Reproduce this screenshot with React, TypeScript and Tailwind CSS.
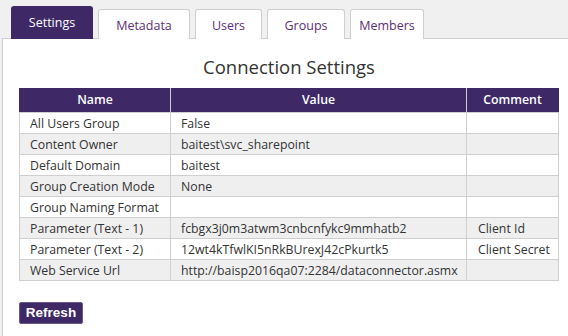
import React from "react"

const rows = [
  { name: "All Users Group", value: "False", comment: "" },
  { name: "Content Owner", value: "baitest\\svc_sharepoint", comment: "" },
  { name: "Default Domain", value: "baitest", comment: "" },
  { name: "Group Creation Mode", value: "None", comment: "" },
  { name: "Group Naming Format", value: "", comment: "" },
  { name: "Parameter (Text - 1)", value: "fcbgx3j0m3atwm3cnbcnfykc9mmhatb2", comment: "Client Id" },
  { name: "Parameter (Text - 2)", value: "12wt4kTfwlKI5nRkBUrexJ42cPkurtk5", comment: "Client Secret" },
  { name: "Web Service Url", value: "http://baisp2016qa07:2284/dataconnector.asmx", comment: "" },
]

const tabs = [
  { label: "Settings", w: "w-[82px]" },
  { label: "Metadata", w: "w-[92px]" },
  { label: "Users", w: "w-[67px]" },
  { label: "Groups", w: "w-[78px]" },
  { label: "Members", w: "w-[74px]" },
]

export default function App() {
  return (
    <div className="w-[568px] h-[336px] overflow-hidden bg-[#f0f0f0] font-['Open_Sans',sans-serif] text-[#333]">
      {/* Tabs */}
      <div className="flex items-end gap-[5px] pl-[11px] pt-[6px] h-[39px]">
        {tabs.map((t, i) =>
          i === 0 ? (
            <div
              key={t.label}
              className={`${t.w} h-[33px] bg-[#3e2966] rounded-t-[3px] flex items-center justify-center text-white text-[12.5px] pt-[2px] relative z-10`}
            >
              {t.label}
            </div>
          ) : (
            <div
              key={t.label}
              className={`${t.w} h-[30px] bg-white border border-b-0 border-[#cfcfcf] rounded-t-[3px] flex items-center justify-center text-[#5e2e72] text-[12.5px] pt-[3px]`}
            >
              {t.label}
            </div>
          )
        )}
      </div>

      {/* Panel */}
      <div className="ml-[2px] -mt-[1px] w-[580px] h-[320px] bg-white border border-[#cfcfcf] pl-[16px] pt-[15px]">
        <h2 className="w-[540px] text-center text-[18.5px] leading-[26px] text-[#333]">Connection Settings</h2>
        <table className="mt-[8px] w-[540px] border-collapse text-[12.3px]">
          <thead>
            <tr className="bg-[#3e2966] text-white h-[24px]">
              <th className="w-[151px] border border-[#cfcfcf] border-t-[#3e2966] border-l-[#3e2966] font-semibold">Name</th>
              <th className="w-[296px] border border-[#cfcfcf] border-t-[#3e2966] font-semibold">Value</th>
              <th className="border border-[#cfcfcf] border-t-[#3e2966] border-r-[#3e2966] font-semibold">Comment</th>
            </tr>
          </thead>
          <tbody>
            {rows.map((r, i) => (
              <tr key={r.name} className={`h-[21px] ${i % 2 === 1 ? "bg-[#efefef]" : "bg-white"}`}>
                <td className="border border-[#cfcfcf] pl-[10px] py-0 leading-[19px]">{r.name}</td>
                <td className="border border-[#cfcfcf] pl-[10px] py-0 leading-[19px]">{r.value}</td>
                <td className="border border-[#cfcfcf] pl-[11px] py-0 leading-[19px]">{r.comment}</td>
              </tr>
            ))}
          </tbody>
        </table>
        <button className="mt-[21px] w-[64px] h-[22px] bg-[#3e2966] border border-[#6b5a8a] rounded-[2px] text-white font-bold text-[13.5px] font-['Liberation_Sans',sans-serif] flex items-center justify-center">
          Refresh
        </button>
      </div>
    </div>
  )
}
